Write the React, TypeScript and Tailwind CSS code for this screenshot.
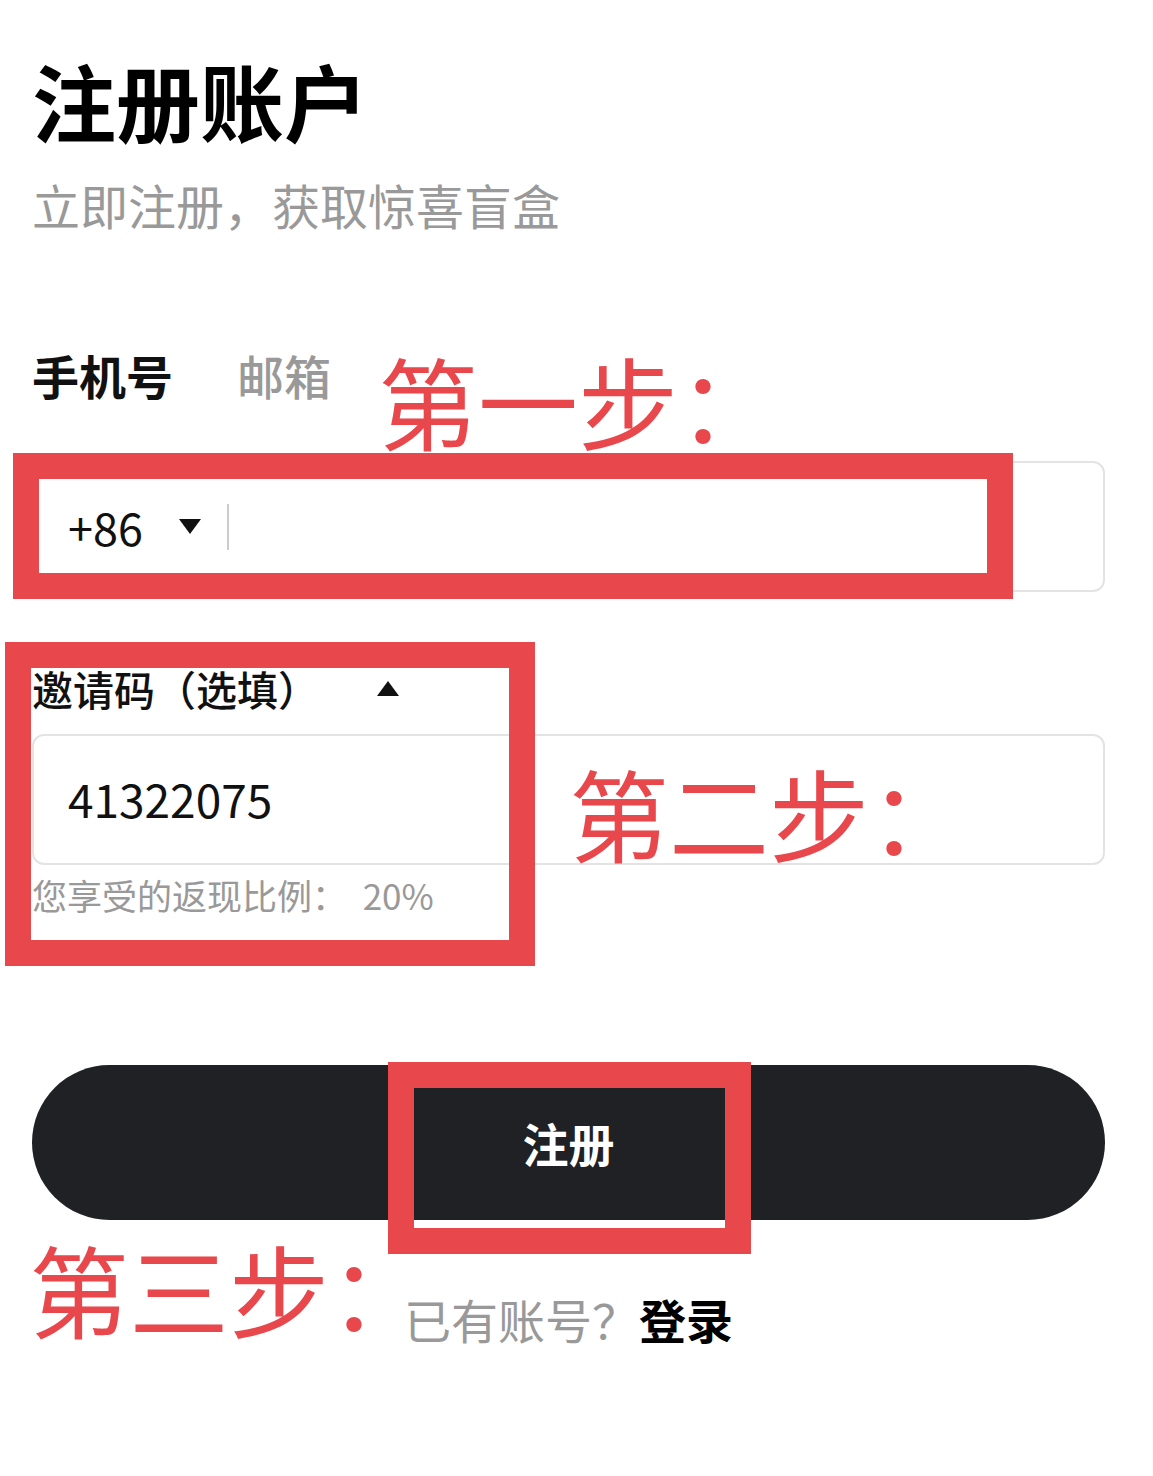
import React from "react";

const cjk = { fontFamily: '"Noto Sans CJK SC", "Noto Sans", sans-serif' };

function Step({ label, className }: { label: string; className: string }) {
  return (
    <div className={`absolute text-[100px] leading-[100px] text-[#e8474c] whitespace-nowrap ${className}`}>
      {label}
      <span className="tracking-[-62px]">：</span>
    </div>
  );
}

export default function App() {
  return (
    <div className="relative w-[1153px] h-[1476px] bg-white overflow-hidden" style={cjk}>
      <div className="flex flex-col pl-[32px] pr-[48px] pt-[58px]">
        <h1 className="text-[84px] leading-[84px] font-bold text-black">注册账户</h1>
        <p className="mt-[38px] text-[48px] leading-[48px] text-[#999999]">立即注册，获取惊喜盲盒</p>

        <div className="mt-[123px] flex items-center gap-[64px] text-[47px] leading-[47px]">
          <span className="font-bold text-[#111111]">手机号</span>
          <span className="font-medium text-[#999999]">邮箱</span>
        </div>

        <div className="mt-[63px] h-[131px] rounded-[12px] border-2 border-[#e3e3e3] flex items-center pl-[34px]">
          <span className="text-[45px] leading-[45px] text-[#111111]">+86</span>
          <svg className="ml-[36px]" width="22" height="15" viewBox="0 0 22 15">
            <polygon points="0,0 22,0 11,15" fill="#111111" />
          </svg>
          <div className="ml-[26px] w-[2px] h-[46px] bg-[#cccccc]" />
        </div>

        <div className="mt-[76px] flex items-center text-[41px] leading-[41px]">
          <span className="font-medium text-[#111111]">邀请码（选填）</span>
          <svg className="ml-[58px]" width="22" height="15" viewBox="0 0 22 15">
            <polygon points="0,15 22,15 11,0" fill="#111111" />
          </svg>
        </div>

        <div className="mt-[25px] h-[131px] rounded-[12px] border-2 border-[#e3e3e3] flex items-center pl-[34px] pb-[4px]">
          <span className="text-[46px] leading-[46px] text-[#111111]">41322075</span>
        </div>

        <p className="mt-[12px] text-[35px] leading-[35px] text-[#999999] whitespace-pre">您享受的返现比例：  20%</p>

        <button className="mt-[153px] h-[155px] rounded-full bg-[#1f2124] text-white text-[46px] font-bold">注册</button>

        <div className="mt-[75px] flex justify-center items-baseline text-[47px] leading-[47px]">
          <span className="text-[#999999]">已有账号？</span>
          <span className="font-bold text-black">登录</span>
        </div>
      </div>

      {/* annotations */}
      <div className="absolute left-[13px] top-[453px] w-[1000px] h-[146px] border-[26px] border-[#e8474c]" />
      <div className="absolute left-[5px] top-[642px] w-[530px] h-[324px] border-[26px] border-[#e8474c]" />
      <div className="absolute left-[388px] top-[1062px] w-[363px] h-[192px] border-[26px] border-[#e8474c]" />

      <Step label="第一步" className="left-[378px] top-[350px]" />
      <Step label="第二步" className="left-[569px] top-[762px]" />
      <Step label="第三步" className="left-[29px] top-[1238px]" />
    </div>
  );
}
